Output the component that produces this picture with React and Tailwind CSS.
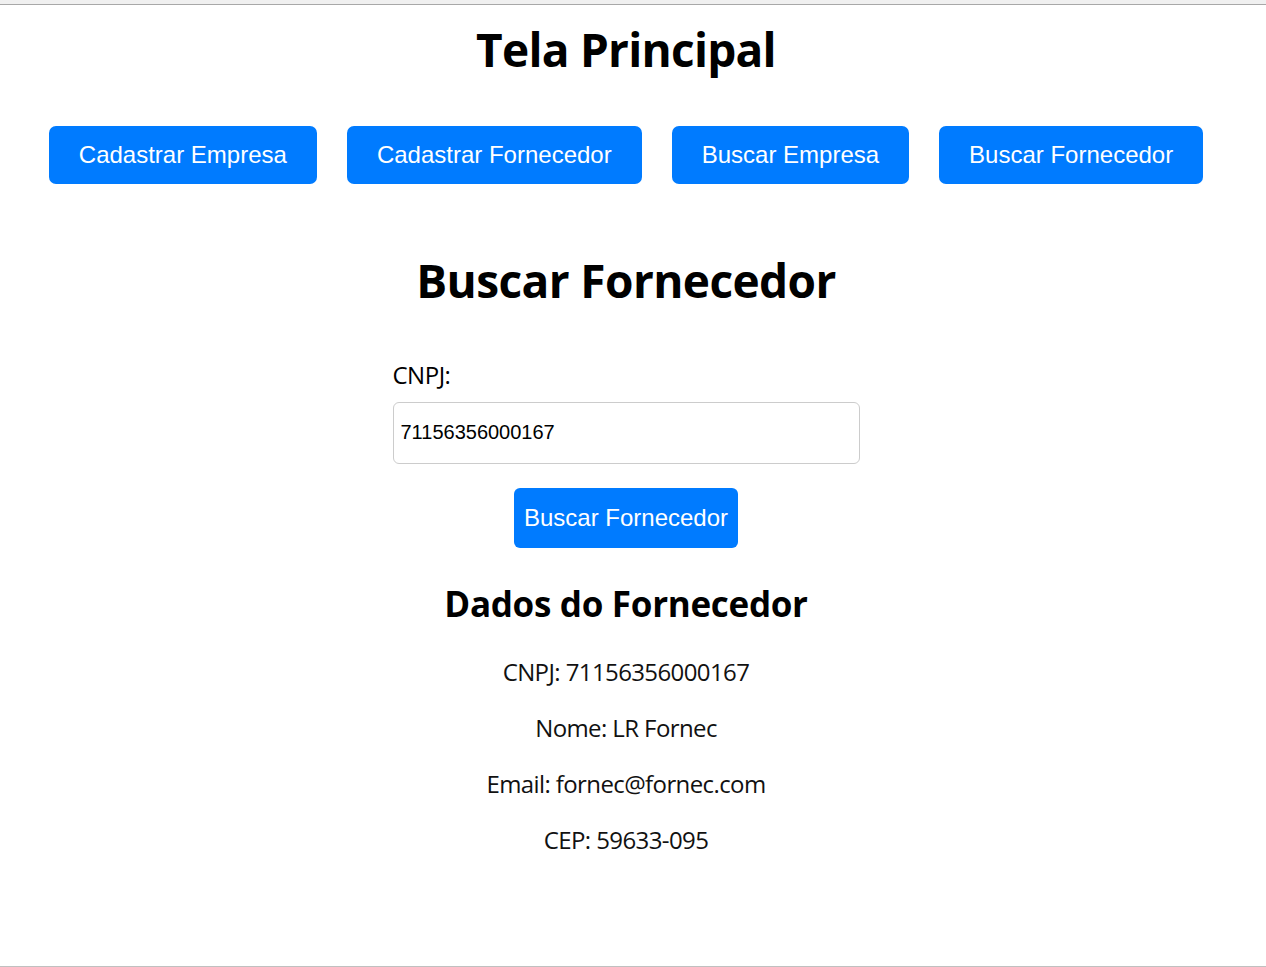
export default function App() {
  const navs = ["Cadastrar Empresa", "Cadastrar Fornecedor", "Buscar Empresa", "Buscar Fornecedor"];
  const data = [
    "CNPJ: 71156356000167",
    "Nome: LR Fornec",
    "Email: fornec@fornec.com",
    "CEP: 59633-095",
  ];
  const head = { fontFamily: '"Open Sans", "Noto Sans", sans-serif' };
  const arial = { fontFamily: '"Liberation Sans", Arial, sans-serif' };
  return (
    <div className="w-[1266px] h-[967px] bg-white flex flex-col overflow-hidden text-black">
      <div className="h-[5px] shrink-0 bg-[#f0f0f0] border-b border-[#a8a8a8]" />
      <div className="flex-1 w-[1252px] flex flex-col items-center">
        <h1 style={head} className="mt-[17px] text-[46px] leading-[54px] font-bold tracking-[-0.75px]">Tela Principal</h1>
        <div className="mt-[50px] flex gap-[30px]">
          {navs.map((n) => (
            <button key={n} style={arial} className="h-[58px] px-[30px] rounded-[7px] bg-[#007bff] text-white text-[24px] leading-[28px]">
              {n}
            </button>
          ))}
        </div>
        <h2 style={head} className="mt-[69px] text-[46px] leading-[54px] font-bold tracking-[-0.6px]">Buscar Fornecedor</h2>
        <div className="mt-[52px] w-[467px] flex flex-col items-center">
          <label style={head} className="self-start text-[24px] leading-[32px] tracking-[-0.5px]">CNPJ:</label>
          <div className="mt-[11px] w-[467px] h-[62px] border border-[#cccccc] rounded-[6px] flex items-center px-[7px] pb-[3px]">
            <span style={arial} className="text-[20px] leading-[24px] text-black">71156356000167</span>
          </div>
          <button style={arial} className="mt-[24px] h-[60px] px-[10px] rounded-[6px] bg-[#007bff] text-white text-[24px] leading-[28px]">
            Buscar Fornecedor
          </button>
        </div>
        <h3 style={head} className="mt-[34px] text-[35px] leading-[43px] font-bold tracking-[-0.3px]">Dados do Fornecedor</h3>
        <div className="mt-[31px] flex flex-col items-center gap-[24px]">
          {data.map((d) => (
            <p key={d} style={head} className="text-[24px] leading-[32px] text-[#111] tracking-[-0.6px]">{d}</p>
          ))}
        </div>
      </div>
      <div className="h-px shrink-0 bg-[#c0c0c0]" />
    </div>
  );
}
